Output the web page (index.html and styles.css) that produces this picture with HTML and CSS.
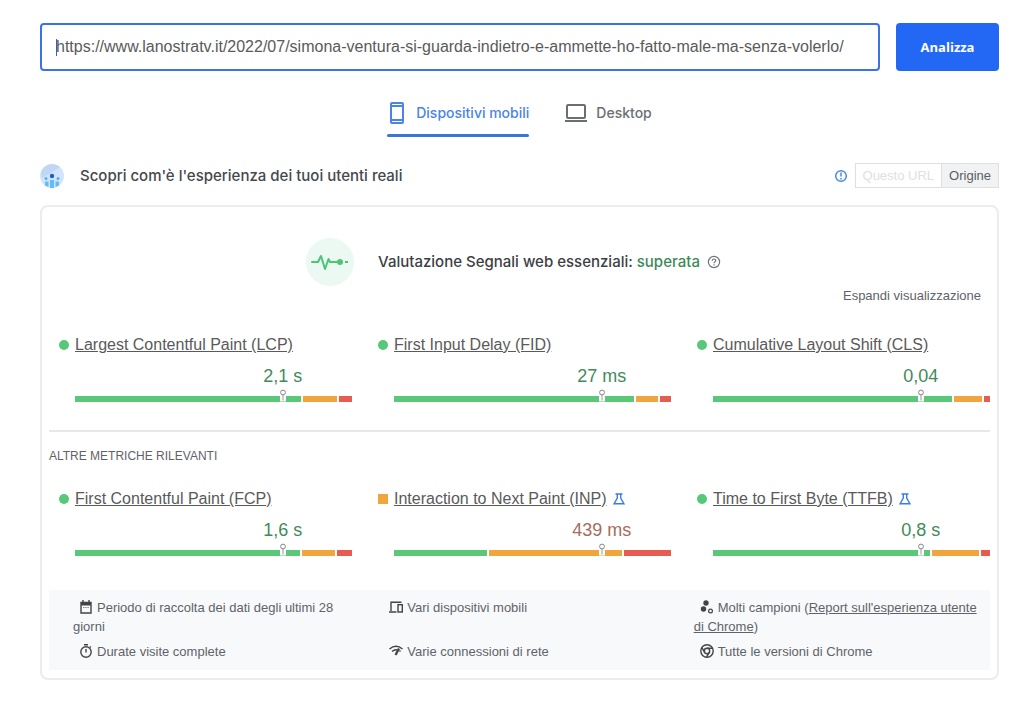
FILE: index.html
```html
<!DOCTYPE html>
<html lang="it">
<head>
<meta charset="utf-8">
<meta name="viewport" content="width=device-width, initial-scale=1">
<title>PageSpeed Insights</title>
<link rel="stylesheet" href="styles.css">
</head>
<body>
<main class="page">
  <form class="search">
    <input class="search-input" type="text" aria-label="URL della pagina web" value="https://www.lanostratv.it/2022/07/simona-ventura-si-guarda-indietro-e-ammette-ho-fatto-male-ma-senza-volerlo/">
    <button class="search-button" type="button">Analizza</button>
  </form>

  <nav class="tabs" aria-label="Dispositivo">
    <button class="tab tab-active" type="button">
      <svg class="tab-icon-mobile" viewBox="0 0 16 24" fill="none" stroke="currentColor" stroke-width="2"><rect x="2" y="2" width="12" height="20" rx="1"/><path d="M2 5h12M2 19h12"/></svg>
      Dispositivi mobili
    </button>
    <button class="tab" type="button">
      <svg class="tab-icon-desktop" viewBox="0 0 22 18" fill="none" stroke="currentColor" stroke-width="2"><rect x="2" y="1" width="18" height="13" rx="1"/><path d="M0 17h22"/></svg>
      Desktop
    </button>
  </nav>

  <header class="section-head">
    <svg class="users-icon" viewBox="0 0 24 24"><circle cx="12" cy="12" r="12" fill="#d3e5fc"/><path d="M1 8A12 12 0 0 1 20 3L14 7Q10 10 2 14Z" fill="#bfd7f5"/><circle cx="12" cy="12" r="2.200" fill="#1a5fd0"/><circle cx="6" cy="14.500" r="1.500" fill="#4fb3f0"/><circle cx="18" cy="14.500" r="1.500" fill="#4fb3f0"/><path d="M10 16h4v8h-4zM5 17.500h3.500v5.500L5 21.500zM15.500 17.500H19v4L15.500 23z" fill="#62bdf5"/></svg>
    <h1 class="section-title">Scopri com'è l'esperienza dei tuoi utenti reali</h1>
    <svg class="info-icon" viewBox="0 0 14 14" fill="none" stroke="#4a86e8" stroke-width="1.500"><circle cx="7" cy="7" r="5.300"/><path d="M7 3.500v4M7 9v1.500"/></svg>
    <div class="scope">
      <button class="scope-button scope-disabled" type="button" disabled>Questo URL</button>
      <button class="scope-button scope-selected" type="button">Origine</button>
    </div>
  </header>

  <section class="card">
    <div class="verdict">
      <svg class="verdict-icon" viewBox="0 0 48 48"><circle cx="24" cy="24" r="24" fill="#ecf9f2"/><path d="M6 24h6l3-6 4 13 3.500-10 1.500 3h4" fill="none" stroke="#4cc575" stroke-width="2" stroke-linejoin="round" stroke-linecap="round"/><circle cx="34" cy="24" r="3" fill="#4cc575"/><path d="M27 24h4M39 24h3" stroke="#4cc575" stroke-width="2"/></svg>
      <h2 class="verdict-title">Valutazione Segnali web essenziali: <span class="good-text">superata</span></h2>
      <svg class="help-icon" viewBox="0 0 14 14" fill="none" stroke="#70757a" stroke-width="1.200"><circle cx="7" cy="7" r="5.600"/><path d="M5.200 5.700Q5.200 4 7 4T8.800 5.600C8.800 6.800 7 6.800 7 8.200M7 9.300v1.200"/></svg>
    </div>
    <div class="expand-row"><button class="expand" type="button">Espandi visualizzazione</button></div>

    <div class="metrics">
      <article class="metric">
        <h3 class="metric-head"><span class="dot"></span><a class="metric-link" href="#lcp">Largest Contentful Paint (LCP)</a></h3>
        <p class="value">2,1 s</p>
        <div class="bar"><i class="seg green" style="flex-grow:228"></i><i class="seg amber" style="flex-grow:34"></i><i class="seg red" style="flex-grow:13"></i><svg class="pin" viewBox="0 0 6 12"><path d="M0 6h6v6H0z" fill="#fff"/><path d="M3 5v6" stroke="#999"/><circle cx="3" cy="3" r="2.400" fill="#fff" stroke="#858585"/></svg></div>
      </article>
      <article class="metric">
        <h3 class="metric-head"><span class="dot"></span><a class="metric-link" href="#fid">First Input Delay (FID)</a></h3>
        <p class="value">27 ms</p>
        <div class="bar"><i class="seg green" style="flex-grow:241"></i><i class="seg amber" style="flex-grow:22"></i><i class="seg red" style="flex-grow:11"></i><svg class="pin" viewBox="0 0 6 12"><path d="M0 6h6v6H0z" fill="#fff"/><path d="M3 5v6" stroke="#999"/><circle cx="3" cy="3" r="2.400" fill="#fff" stroke="#858585"/></svg></div>
      </article>
      <article class="metric">
        <h3 class="metric-head"><span class="dot"></span><a class="metric-link" href="#cls">Cumulative Layout Shift (CLS)</a></h3>
        <p class="value">0,04</p>
        <div class="bar"><i class="seg green" style="flex-grow:240"></i><i class="seg amber" style="flex-grow:28"></i><i class="seg red" style="flex-grow:6"></i><svg class="pin" viewBox="0 0 6 12"><path d="M0 6h6v6H0z" fill="#fff"/><path d="M3 5v6" stroke="#999"/><circle cx="3" cy="3" r="2.400" fill="#fff" stroke="#858585"/></svg></div>
      </article>
    </div>

    <h2 class="other-title">ALTRE METRICHE RILEVANTI</h2>

    <div class="metrics metrics-other">
      <article class="metric">
        <h3 class="metric-head"><span class="dot"></span><a class="metric-link" href="#fcp">First Contentful Paint (FCP)</a></h3>
        <p class="value">1,6 s</p>
        <div class="bar"><i class="seg green" style="flex-grow:225"></i><i class="seg amber" style="flex-grow:33"></i><i class="seg red" style="flex-grow:15"></i><svg class="pin" viewBox="0 0 6 12"><path d="M0 6h6v6H0z" fill="#fff"/><path d="M3 5v6" stroke="#999"/><circle cx="3" cy="3" r="2.400" fill="#fff" stroke="#858585"/></svg></div>
      </article>
      <article class="metric">
        <h3 class="metric-head"><span class="dot square"></span><a class="metric-link" href="#inp">Interaction to Next Paint (INP)</a>
          <svg class="flask" viewBox="0 0 12 12" fill="none" stroke="#3b7de8" stroke-width="1.400"><path d="M2.500 1h7M4.300 1v4L1 10.800h10L7.700 5V1"/></svg></h3>
        <p class="value value-fair">439 ms</p>
        <div class="bar"><i class="seg green" style="flex-grow:93"></i><i class="seg amber" style="flex-grow:133"></i><i class="seg red" style="flex-grow:47"></i><svg class="pin" viewBox="0 0 6 12"><path d="M0 6h6v6H0z" fill="#fff"/><path d="M3 5v6" stroke="#999"/><circle cx="3" cy="3" r="2.400" fill="#fff" stroke="#858585"/></svg></div>
      </article>
      <article class="metric">
        <h3 class="metric-head"><span class="dot"></span><a class="metric-link" href="#ttfb">Time to First Byte (TTFB)</a>
          <svg class="flask" viewBox="0 0 12 12" fill="none" stroke="#3b7de8" stroke-width="1.400"><path d="M2.500 1h7M4.300 1v4L1 10.800h10L7.700 5V1"/></svg></h3>
        <p class="value">0,8 s</p>
        <div class="bar"><i class="seg green" style="flex-grow:218"></i><i class="seg amber" style="flex-grow:47"></i><i class="seg red" style="flex-grow:9"></i><svg class="pin" viewBox="0 0 6 12"><path d="M0 6h6v6H0z" fill="#fff"/><path d="M3 5v6" stroke="#999"/><circle cx="3" cy="3" r="2.400" fill="#fff" stroke="#858585"/></svg></div>
      </article>
    </div>

    <div class="notes">
      <p class="note"><svg class="note-icon" viewBox="0 0 14 14"><path d="M2 2.500h10v10.500H2zM4 0v3M10 0v3" fill="none" stroke="#444" stroke-width="1.400"/><path d="M2 2h10v3.500H2z" fill="#444"/><path d="M4 7.500h6" stroke="#888" stroke-dasharray="1.500 .7"/></svg>Periodo di raccolta dei dati degli ultimi 28 giorni</p>
      <p class="note"><svg class="note-icon" viewBox="0 0 14 14" fill="none" stroke="#444" stroke-width="1.400"><path d="M2 11V2.200h10.500M0 12h7.500"/><rect x="9" y="4.700" width="4.300" height="7.300"/></svg>Vari dispositivi mobili</p>
      <p class="note"><svg class="note-icon" viewBox="0 0 14 14" fill="#444"><circle cx="6" cy="3" r="2.700"/><circle cx="3.500" cy="9" r="2.700"/><circle cx="10.500" cy="11" r="1.900" fill="none" stroke="#444" stroke-width="1.200"/></svg>Molti campioni (<a class="note-link" href="#crux">Report sull'esperienza utente di Chrome</a>)</p>
      <p class="note"><svg class="note-icon" viewBox="0 0 14 14" fill="none" stroke="#444" stroke-width="1.400"><circle cx="7" cy="8" r="5.200"/><path d="M5 .8h4M7 5v3.500M10.800 3.500l1-1"/></svg>Durate visite complete</p>
      <p class="note"><svg class="note-icon" viewBox="0 0 14 14" fill="none" stroke="#444" stroke-width="1.500"><path d="M.5 5Q7-.3 13.500 5M3 7.500Q6 5 8.500 6M11.500 7.500l-1-.8"/><path d="M10 4.500L6.500 11" stroke-width="2.300"/></svg>Varie connessioni di rete</p>
      <p class="note"><svg class="note-icon" viewBox="0 0 14 14" fill="none" stroke="#444" stroke-width="1.400"><circle cx="7" cy="7" r="6.200"/><circle cx="7" cy="7" r="2.700"/><path d="M7 4.300h5.600M4.700 8.400L1.900 3.600M9.300 8.400L6.500 13.200"/></svg>Tutte le versioni di Chrome</p>
    </div>
  </section>
</main>
</body>
</html>
```
FILE: styles.css
```css
* { box-sizing: border-box; }

body {
  margin: 0;
  background: #fff;
  color: #5f6368;
  font-family: "Liberation Sans", Arial, sans-serif;
  font-size: 13px;
}

h1, h2, h3, p { margin: 0; font-weight: 400; }
button { font: inherit; cursor: pointer; }
svg { display: block; flex: none; }

.page { padding: 23px 25px 28px 40px; }

.search { display: flex; gap: 16px; }
.search-input {
  flex: 1;
  min-width: 0;
  height: 48px;
  padding: 0 14px;
  border: 2px solid #3b72e8;
  border-radius: 4px;
  /* caret at the start of the field */
  background: linear-gradient(#3b62c0, #3b62c0) 14px 50% / 1px 17px no-repeat #fff;
  color: #5a5a5a;
  font-family: inherit;
  font-size: 16px;
}
.search-button {
  min-width: 103px;
  padding: 0 16px;
  border: 0;
  border-radius: 4px;
  background: #2368f5;
  color: #fff;
  font: 700 13px "Open Sans", sans-serif;
}

.tabs { display: flex; justify-content: center; gap: 36px; margin-top: 27px; }
.tab {
  position: relative;
  display: flex;
  align-items: center;
  gap: 9px;
  height: 39px;
  padding: 0 0 10px;
  border: 0;
  background: none;
  color: #6b6e72;
  font: 500 14px Inter, sans-serif;
}
.tab-active { gap: 11px; padding-left: 2px; color: #4a84e4; }
.tab-active::after {
  content: "";
  position: absolute;
  inset: auto 0 0;
  height: 3px;
  border-radius: 2px;
  background: #3b74dc;
}
.tab-icon-mobile { width: 16px; height: 24px; }
.tab-icon-desktop { width: 22px; height: 18px; }

.section-head { display: flex; align-items: center; margin-top: 26px; }
.users-icon { width: 24px; height: 24px; }
.section-title {
  flex: 1;
  margin-left: 16px;
  color: #45484c;
  font: 500 15px/20px Inter, sans-serif;
}
.info-icon { width: 14px; height: 14px; margin-right: 7px; }
.scope { display: flex; border: 1px solid #dedfe1; }
.scope-button { height: 23px; padding: 0 7px; border: 0; }
.scope-disabled { background: #fff; color: #dfe0e2; }
.scope-selected { border-left: 1px solid #dedfe1; background: #f1f2f4; color: #5a5d61; }

.card {
  margin-top: 17px;
  padding: 31px 7px 8px;
  border: 2px solid #ececec;
  border-radius: 8px;
}
.verdict { display: flex; align-items: center; justify-content: center; padding-right: 12px; }
.verdict-icon { width: 48px; height: 48px; }
.verdict-title {
  margin: 0 7px 0 24px;
  color: #3c4043;
  font: 500 15px/20px Inter, sans-serif;
}
.good-text { color: #3c8a58; }
.help-icon { width: 14px; height: 14px; }
.expand-row { display: flex; justify-content: flex-end; padding-right: 9px; }
.expand { padding: 0; border: 0; background: none; color: #5f6368; line-height: 20px; }

.metrics {
  display: grid;
  grid-template-columns: repeat(3, minmax(0, 1fr));
  gap: 26px;
  padding: 29px 0 28px 10px;
}
.metrics-other { padding-top: 23px; }
.metric { padding-left: 16px; }
.metric-head { display: flex; align-items: center; gap: 6px; margin-left: -16px; line-height: 20px; }
.dot { width: 10px; height: 10px; border-radius: 5px; background: #56c878; }
.square { border-radius: 0; background: #f0a63c; }
.metric-link { color: #5a5a5a; font-size: 16px; }
.flask { width: 12px; height: 12px; }
.value {
  padding-left: 50%;
  margin-top: 9px;
  color: #428a5b;
  font-size: 18px;
  line-height: 24px;
  text-align: center;
}
.value-fair { color: #a56c5c; }
.bar { position: relative; display: flex; gap: 2px; margin-top: 8px; }
.seg { flex: 1 1 0; height: 6px; }
.green { background: #5ac878; }
.amber { background: #f0a63c; }
.red { background: #e85b50; }
.pin { position: absolute; left: 74%; bottom: 0; width: 6px; height: 13px; }

.other-title {
  padding-top: 14px;
  border-top: 2px solid #e8e8e8;
  font-size: 12px;
  line-height: 20px;
}

.notes {
  display: grid;
  grid-template-columns: repeat(3, minmax(0, 1fr));
  gap: 6px 26px;
  margin-top: 6px;
  padding: 8px 12px 9px 24px;
  background: #f8f9fb;
}
.note { line-height: 19px; text-indent: 6px; }
.note-icon { display: inline-block; width: 14px; height: 14px; margin-right: 4px; vertical-align: -2px; }
.note-link { color: inherit; }
```
